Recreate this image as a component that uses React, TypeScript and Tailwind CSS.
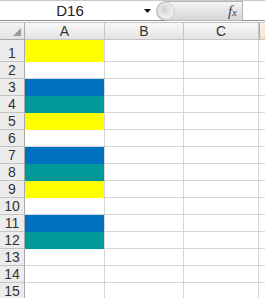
const FILLS: Record<number, string> = {
  1: "bg-[#ffff00]",
  3: "bg-[#0070c0]",
  4: "bg-[#009999]",
  5: "bg-[#ffff00]",
  7: "bg-[#0070c0]",
  8: "bg-[#009999]",
  9: "bg-[#ffff00]",
  11: "bg-[#0070c0]",
  12: "bg-[#009999]",
};

const ROWS = Array.from({ length: 15 }, (_, i) => i + 1);

export default function App() {
  return (
    <div className="w-[265px] h-[298px] overflow-hidden bg-white font-['Liberation_Sans',Arial,sans-serif] text-[#333]">
      {/* Name box + formula bar */}
      <div className="flex h-[21px] border-t border-[#c8c8c8] border-b border-b-[#8e8e8e]">
        <div className="w-[156px] flex items-center bg-white">
          <span className="w-[140px] text-center text-[15px] leading-none text-[#222]">D16</span>
          <svg width="7" height="4" viewBox="0 0 7 4" className="ml-[4px]">
            <path d="M0 0h7L3.5 4z" fill="#111" />
          </svg>
        </div>
        <div className="flex items-center w-[86px] h-[20px] bg-gradient-to-b from-[#f4f4f4] to-[#d6d6d6] rounded-l-[10px] border border-[#b5b5b5] border-r-0">
          <div className="w-[18px] h-[18px] rounded-full bg-[radial-gradient(circle_at_40%_40%,#d0d0d0_0%,#e8e8e8_45%,#f8f8f8_100%)] border border-[#cfcfcf]" />
          <span className="ml-auto mr-[5px] text-[15px] italic font-['Liberation_Serif',serif] text-[#444] leading-none">
            f<span className="text-[11px]">x</span>
          </span>
        </div>
        <div className="flex-1 border-l border-[#b5b5b5] bg-white" />
      </div>
      <div className="h-[1px] bg-white" />

      {/* Sheet */}
      <div className="grid grid-cols-[25px_80px_79px_75px_1fr] border-t border-[#c4c4c4]">
        {/* Column header row */}
        <div className="h-[17px] bg-gradient-to-b from-[#f4f4f4] to-[#e2e2e2] border-r border-b border-[#a9a9a9] relative">
          <svg width="8" height="8" viewBox="0 0 8 8" className="absolute right-[3px] bottom-[3px]">
            <path d="M8 0v8H0z" fill="#9a9a9a" />
          </svg>
        </div>
        {["A", "B", "C"].map((c) => (
          <div
            key={c}
            className="h-[17px] flex items-center justify-center text-[14px] leading-none bg-gradient-to-b from-[#f8f8f8] to-[#e4e4e4] border-r border-b border-[#c5c5c5]"
          >
            {c}
          </div>
        ))}
        <div className="h-[17px] bg-gradient-to-b from-[#fbf3e8] to-[#f3e2c8] border-l border-l-[#f0a040] border-b border-[#c5c5c5]" />

        {ROWS.map((r) => {
          const h = r === 1 ? "h-[22px]" : "h-[17px]";
          const fill = FILLS[r];
          return [
            <div
              key={`h${r}`}
              className={`${h} flex items-end justify-center pb-[1px] text-[14px] leading-none bg-[#ececec] border-r border-b border-[#a9a9a9] border-b-[#c5c5c5]`}
            >
              {r}
            </div>,
            <div
              key={`a${r}`}
              className={`${h} border-r border-[#d6d6d6] ${fill ? `${fill} border-b-0` : "border-b"}`}
            />,
            <div key={`b${r}`} className={`${h} border-r border-b border-[#d6d6d6]`} />,
            <div key={`c${r}`} className={`${h} border-r border-b border-[#d6d6d6]`} />,
            <div key={`d${r}`} className={`${h} border-b border-[#d6d6d6]`} />,
          ];
        })}
      </div>
    </div>
  );
}
